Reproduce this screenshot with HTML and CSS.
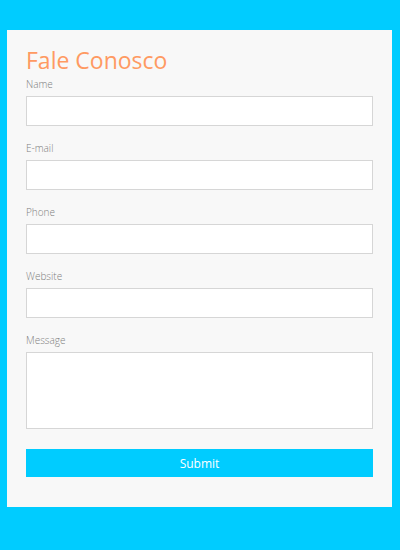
FILE: index.html
```html
<!DOCTYPE html>
<html>
<head>
<meta charset="utf-8">
<link rel="stylesheet" href="styles.css">
</head>
<body>
<form class="card">
  <h1 class="title">Fale Conosco</h1>
  <div class="field">
    <label class="label">Name</label>
    <input class="input" type="text">
  </div>
  <div class="field">
    <label class="label">E-mail</label>
    <input class="input" type="text">
  </div>
  <div class="field">
    <label class="label">Phone</label>
    <input class="input" type="text">
  </div>
  <div class="field">
    <label class="label">Website</label>
    <input class="input" type="text">
  </div>
  <div class="field">
    <label class="label">Message</label>
    <textarea class="input textarea"></textarea>
  </div>
  <button class="submit" type="button">Submit</button>
</form>
</body>
</html>
```
FILE: styles.css
```css
html, body {
  margin: 0;
  padding: 0;
  background: #00ccff;
  font-family: "Open Sans", "Noto Sans", sans-serif;
}
body {
  padding: 30px 0 0 7px;
}
.card {
  box-sizing: border-box;
  width: 385px;
  background: #f8f8f8;
  padding: 14px 19px 30px 19px;
  display: flex;
  flex-direction: column;
}
.title {
  margin: 0;
  font-size: 23px;
  line-height: 32px;
  font-weight: 400;
  color: #ff9a62;
}
.field {
  display: flex;
  flex-direction: column;
  margin-bottom: 15px;
}
.field:first-of-type {
  margin-top: 1px;
}
.label {
  font-size: 10px;
  line-height: 14px;
  font-weight: 300;
  color: #808080;
  margin-bottom: 5px;
}
.input {
  box-sizing: border-box;
  width: 100%;
  height: 30px;
  margin: 0;
  border: 1px solid #d6d6d6;
  background: #fff;
  outline: none;
  padding: 0 6px;
  font-family: inherit;
}
.textarea {
  height: 77px;
  resize: none;
}
.field:last-of-type {
  margin-bottom: 20px;
}
.submit {
  height: 28px;
  width: 100%;
  border: none;
  margin: 0;
  background: #00ccff;
  color: #fff;
  font-family: inherit;
  font-size: 12px;
  padding: 0;
}
```
